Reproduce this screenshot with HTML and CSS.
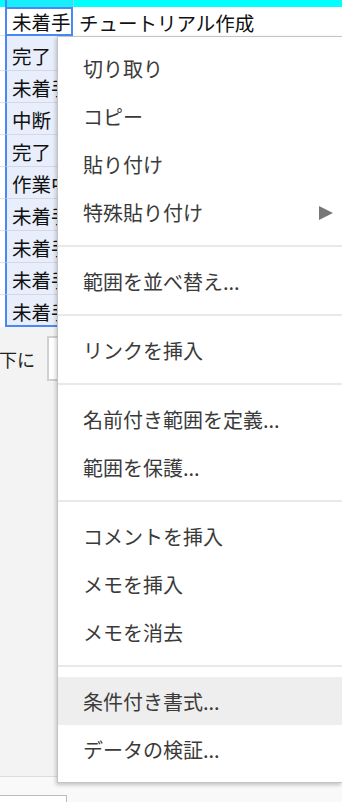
FILE: index.html
```html
<!DOCTYPE html>
<html lang="ja">
<head>
<meta charset="utf-8">
<title>Sheet context menu</title>
<link rel="stylesheet" href="styles.css">
</head>
<body>
<div class="page">
  <div class="topbar"><div class="topbar-gut"></div><div class="topbar-a"></div><div class="topbar-b"></div></div>
  <div class="sheet">
    <div class="row row-first">
      <div class="gut"></div>
      <div class="cell-a active">未着手</div>
      <div class="cell-b">チュートリアル作成</div>
    </div>
    <div class="row row-second"><div class="gut"></div><div class="cell-a sel">完了</div><div class="cell-b"></div></div>
    <div class="row"><div class="gut"></div><div class="cell-a sel">未着手</div><div class="cell-b"></div></div>
    <div class="row"><div class="gut"></div><div class="cell-a sel">中断</div><div class="cell-b"></div></div>
    <div class="row"><div class="gut"></div><div class="cell-a sel">完了</div><div class="cell-b"></div></div>
    <div class="row"><div class="gut"></div><div class="cell-a sel">作業中</div><div class="cell-b"></div></div>
    <div class="row"><div class="gut"></div><div class="cell-a sel">未着手</div><div class="cell-b"></div></div>
    <div class="row"><div class="gut"></div><div class="cell-a sel">未着手</div><div class="cell-b"></div></div>
    <div class="row"><div class="gut"></div><div class="cell-a sel">未着手</div><div class="cell-b"></div></div>
    <div class="row row-last"><div class="gut"></div><div class="cell-a sel">未着手</div><div class="cell-b"></div></div>
  </div>
  <div class="panel">
    <div class="findrow">
      <span class="findlabel">下に</span>
      <div class="findinput"></div>
    </div>
  </div>
  <div class="footer">
    <div class="footbox"></div>
  </div>

  <div class="menu">
    <div class="item">切り取り</div>
    <div class="item">コピー</div>
    <div class="item">貼り付け</div>
    <div class="item">特殊貼り付け<span class="arrow"></span></div>
    <div class="sep"></div>
    <div class="item">範囲を並べ替え...</div>
    <div class="sep"></div>
    <div class="item">リンクを挿入</div>
    <div class="sep"></div>
    <div class="item">名前付き範囲を定義...</div>
    <div class="item">範囲を保護...</div>
    <div class="sep"></div>
    <div class="item">コメントを挿入</div>
    <div class="item">メモを挿入</div>
    <div class="item">メモを消去</div>
    <div class="sep"></div>
    <div class="item hover">条件付き書式...</div>
    <div class="item">データの検証...</div>
  </div>
</div>
</body>
</html>
```

FILE: styles.css
```css
html, body {
  margin: 0;
  padding: 0;
  overflow: hidden;
}
body {
  width: 342px;
  height: 802px;
  background: #ffffff;
  font-family: "Noto Sans CJK JP", "Noto Sans", sans-serif;
  color: #111;
}
.page {
  position: relative;
  width: 342px;
  height: 802px;
  overflow: hidden;
}
.topbar {
  display: flex;
  height: 7px;
  background: #00ffff;
}
.topbar-gut { width: 5px; }
.topbar-a {
  width: 66px;
  border-left: 2px solid #4a89f3;
  background: #19eefc;
}
.topbar-b {
  flex: 1;
  border-left: 1px solid #7fd6ef;
}
.sheet {
  display: flex;
  flex-direction: column;
}
.row {
  display: flex;
  height: 32px;
}
.row-first { height: 29px; }
.row-second { height: 35px; }
.gut {
  width: 5px;
  border-bottom: 1px solid #e2e2e2;
}
.cell-a {
  width: 68px;
  box-sizing: border-box;
  font-size: 19.5px;
  line-height: 20px;
  display: flex;
  align-items: flex-end;
  white-space: nowrap;
  overflow: hidden;
  border-left: 2px solid #4a89f3;
}
.cell-a.active {
  background: #ffffff;
  border: 2px solid #4a89f3;
  padding: 0 0 2px 5px;
}
.cell-a.sel {
  background: #e8eefb;
  border-bottom: 1px solid #d3d8e2;
  padding: 0 0 4px 5px;
}
.row-last .cell-a.sel {
  border-bottom: 2px solid #4a89f3;
  padding-bottom: 3px;
}
.row-last .gut { border-bottom: none; }
.cell-b {
  flex: 1;
  font-size: 19.5px;
  line-height: 20px;
  display: flex;
  align-items: flex-end;
  padding: 0 0 3px 6px;
  white-space: nowrap;
  background: #ffffff;
}
.panel {
  height: 450px;
  background: #f3f3f3;
  border-bottom: 1px solid #dcdcdc;
  padding-top: 9px;
  box-sizing: border-box;
}
.findrow {
  display: flex;
  align-items: center;
  gap: 12px;
}
.findlabel {
  font-size: 18px;
  line-height: 20px;
  color: #222;
  margin-left: -1px;
}
.findinput {
  width: 60px;
  height: 45px;
  box-sizing: border-box;
  background: #ffffff;
  border: 2px solid #d0d0d0;
}
.footer {
  height: 24px;
  background: #f9f9f9;
  padding-top: 18px;
}
.footbox {
  width: 67px;
  height: 20px;
  box-sizing: border-box;
  border-top: 1px solid #bcbcbc;
  border-right: 1px solid #bcbcbc;
  background: #ffffff;
}
.menu {
  position: absolute;
  top: 36px;
  left: 57px;
  right: 0;
  background: #ffffff;
  border: 1px solid #c4c4c4;
  border-right: none;
  padding: 7px 0 9px;
  box-shadow: -1px 2px 4px rgba(0, 0, 0, 0.22);
  color: #3a3a3a;
  font-size: 20px;
}
.item {
  height: 48px;
  display: flex;
  align-items: center;
  justify-content: space-between;
  padding: 0 9px 0 25px;
  white-space: nowrap;
}
.item.hover {
  background: #eeeeee;
}
.arrow {
  width: 0;
  height: 0;
  border-left: 14px solid #777777;
  border-top: 7px solid transparent;
  border-bottom: 7px solid transparent;
  margin-top: 2px;
}
.sep {
  height: 2px;
  background: #e9e9e9;
  margin: 9px 0 10px;
}
```
